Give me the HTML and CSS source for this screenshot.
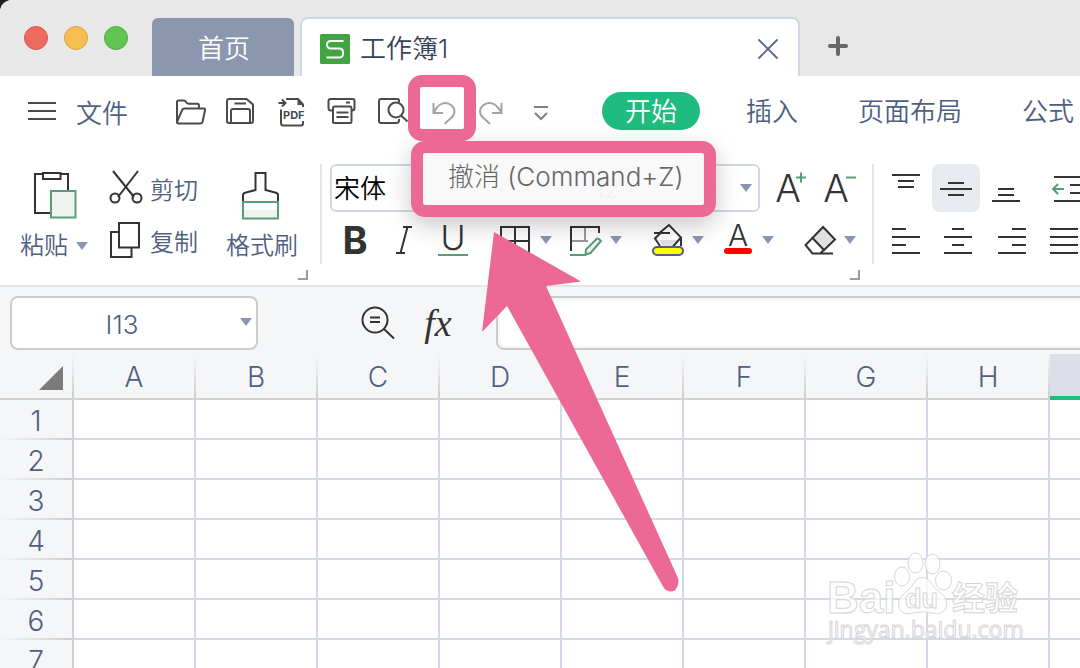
FILE: index.html
```html
<!DOCTYPE html>
<html lang="zh-CN">
<head>
<meta charset="utf-8">
<title>工作簿1</title>
<link rel="stylesheet" href="styles.css">
</head>
<body>
<div class="window">
  <header class="titlebar">
    <div class="lights">
      <button class="light light-close" aria-label="关闭窗口"></button>
      <button class="light light-min" aria-label="最小化"></button>
      <button class="light light-max" aria-label="最大化"></button>
    </div>
    <button class="tab-home">首页</button>
    <div class="tab-doc">
      <svg class="doc-logo" viewBox="0 0 30 30" aria-hidden="true"><rect width="30" height="30" rx="1.500" fill="#40a540"/><path d="M23.500 7H10.500a3.500 3.500 0 0 0-3.500 3.500v.5a3.500 3.500 0 0 0 3.500 3.500h9a3.500 3.500 0 0 1 3.500 3.500v2a3.500 3.500 0 0 1-3.500 3.500H6.500" fill="none" stroke="#fff" stroke-width="2"/></svg>
      <span class="doc-name">工作簿1</span>
      <button class="tab-close" aria-label="关闭"><svg width="20" height="20" viewBox="0 0 20 20"><path d="M.5.5l19 19M19.500.5l-19 19" stroke="#55648a" stroke-width="1.800"/></svg></button>
    </div>
    <button class="tab-add" aria-label="新建"><svg width="20" height="20" viewBox="0 0 20 20"><path d="M10 2v16M2 10h16" stroke="#686868" stroke-width="4" stroke-linecap="round"/></svg></button>
  </header>

  <nav class="menubar">
    <button class="file-menu">
      <svg width="28" height="20" viewBox="0 0 28 20" class="ico"><path d="M0 2h28M0 10h28M0 18h28"/></svg>
      <span>文件</span>
    </button>
    <div class="quick">
      <button aria-label="打开"><svg class="ico" viewBox="0 0 32 32"><path d="M2 26V6q0-1.500 1.500-1.500H9q1 0 2 1.500t2.500 1.700H22q2 0 2 2V12M2 26l5-11.500Q7.500 12.500 9.500 12.500H29q1.500 0 1 2L27.500 26q-.5 1.500-2 1.500H3.500Q2 27.500 2 26z"/></svg></button>
      <button aria-label="保存"><svg class="ico" viewBox="0 0 32 32"><path d="M4 3h17.500l6.500 5.500V25q0 2-2 2H4q-2 0-2-2V5q0-2 2-2zM6 27V15q0-2 2-2h15q2 0 2 2v12M9.500 7.500H21"/></svg></button>
      <button aria-label="输出为PDF"><svg class="ico" viewBox="0 0 32 32"><path d="M11 3h12l5 5.500V11M6 13.500V27q0 2.500 2.500 2.500H26q2 0 2-2V25M3.500 7H10M7 3.500L10.500 7 7 10.500"/><path d="M22.500 3l6 6h-6z" fill="#4a4a4a" stroke="none"/><text class="pdf" x="8" y="22.500">PDF</text></svg></button>
      <button aria-label="打印"><svg class="ico" viewBox="0 0 32 32"><path d="M8 14.500H6q-2.500 0-2.500-2.500V5Q3.500 3 5.500 3h22q2 0 2 2v7q0 2.500-2.500 2.500M8 27V12q0-1.500 1.500-1.500h15.500q1.500 0 1.500 1.500v13.500q0 1.500-1.500 1.500H9.500Q8 27 8 25.500M11.500 16.500h12M11.500 21h12M21 6.500h4"/></svg></button>
      <button aria-label="打印预览"><svg class="ico" viewBox="0 0 32 32"><path d="M24 6V4.500Q24 3 22.500 3H6Q4 3 4 5v20q0 2 2 2h15q3 0 3-2.500V23"/><circle cx="21" cy="14" r="7.500"/><path d="M26 19.500l6.500 6"/></svg></button>
      <button aria-label="撤消"><svg class="ico ico-dim" viewBox="0 0 32 32"><path d="M8.500 7v10H18M8.500 17C12 10 16 7 20 7c5 0 9.500 4 9.500 8.500 0 5-4 6.500-10 12.500"/></svg></button>
      <button aria-label="恢复"><svg class="ico ico-dim" viewBox="0 0 32 32"><path d="M26.500 7v10H17M26.500 17C23 10 19 7 14.500 7c-5 0-9.500 4-9.500 8.500 0 5 4 6.500 10 12.500"/></svg></button>
      <button aria-label="自定义"><svg class="ico ico-mid" viewBox="0 0 32 32"><path d="M9 11h14M10 17l6 6 6-6"/></svg></button>
    </div>
    <div class="menus">
      <button class="menu menu-active">开始</button>
      <button class="menu">插入</button>
      <button class="menu">页面布局</button>
      <button class="menu">公式</button>
    </div>
  </nav>

  <section class="ribbon">
    <div class="group">
      <div class="clip">
        <button class="big">
          <svg width="44" height="48" viewBox="0 0 44 48"><path d="M11 2H3v39h15M28 2h8v17M11 1h17.500v6H11z" fill="none" stroke="#333" stroke-width="2"/><rect x="19" y="19" width="24.500" height="26.500" fill="#edf3f0" stroke="#5a9c76" stroke-width="2"/></svg>
          <span class="big-label">粘贴 <svg class="caret" viewBox="0 0 12 8"><path d="M0 0h12L6 8z"/></svg></span>
        </button>
        <div class="stack">
          <button class="small"><svg width="36" height="36" viewBox="0 0 36 36" fill="none" stroke="#333" stroke-width="2"><path d="M5 1l21 26M30 1L10 27"/><circle cx="7" cy="28" r="4.500"/><circle cx="29" cy="28" r="4.500"/></svg><span>剪切</span></button>
          <button class="small"><svg width="36" height="36" viewBox="0 0 36 36" fill="none" stroke="#333" stroke-width="2"><path d="M11 10H3v25h20.500v-8.500M11 1h20v24.500H11z"/></svg><span>复制</span></button>
        </div>
        <button class="big">
          <svg width="40" height="48" viewBox="0 0 40 48"><path d="M1 31V23q0-2 3-2.500l9.500-2.500V1h10v17l9.500 2.500q3 .5 3 2.500v8" fill="none" stroke="#333" stroke-width="2"/><path d="M1 38h35v8H1z" fill="#edf3f0"/><path d="M1 30h35v16.500H1z" fill="none" stroke="#5a9c76" stroke-width="2"/></svg>
          <span class="big-label">格式刷</span>
        </button>
      </div>
      <button class="launcher" aria-label="剪贴板设置"></button>
    </div>

    <div class="group group-font">
      <div class="font-row">
        <div class="combo">
          <label class="field field-name"><select aria-label="字体"><option>宋体</option></select><svg class="caret" viewBox="0 0 12 8"><path d="M0 0h12L6 8z"/></svg></label>
          <label class="field field-size"><select aria-label="字号"><option>12</option></select><svg class="caret" viewBox="0 0 12 8"><path d="M0 0h12L6 8z"/></svg></label>
        </div>
        <button class="tool" aria-label="增大字号"><svg viewBox="0 0 32 32"><text class="glyph glyph-a" x="12" y="30">A</text><path d="M20 5.500h10M25 .5v10" stroke="#5a9c76" stroke-width="2"/></svg></button>
        <button class="tool" aria-label="减小字号"><svg viewBox="0 0 32 32"><text class="glyph glyph-a" x="12" y="30">A</text><path d="M22 5.500h10" stroke="#5a9c76" stroke-width="2"/></svg></button>
      </div>
      <div class="style-row">
        <div class="set">
          <button class="tool" aria-label="加粗"><svg viewBox="0 0 32 32"><text class="glyph glyph-b" x="17" y="30">B</text></svg></button>
          <button class="tool" aria-label="倾斜"><svg viewBox="0 0 32 32"><path d="M15 3h9M8 29h9M19.500 3l-7 26" fill="none" stroke="#333" stroke-width="2"/></svg></button>
          <button class="tool" aria-label="下划线"><svg viewBox="0 0 32 32"><text class="glyph glyph-u" x="15" y="26">U</text><path d="M0 31h30" stroke="#5a9c76" stroke-width="2"/></svg></button>
        </div>
        <div class="set">
          <button class="tool" aria-label="边框"><svg viewBox="0 0 32 32"><path d="M1 3h28v28H1zM1 17h28M15 3v28" fill="none" stroke="#333" stroke-width="2"/></svg><svg class="caret" viewBox="0 0 12 8"><path d="M0 0h12L6 8z"/></svg></button>
          <button class="tool" aria-label="边框样式"><svg viewBox="0 0 32 32" fill="none" stroke-width="2"><path d="M2 17h16M15 4v14" stroke="#999"/><path d="M1 27V3h28v6" stroke="#333"/><path d="M0 31h16" stroke="#5a9c76"/><path d="M15.500 30.500l.5-5 11-11q1.500-.5 4 2.500l-10.500 12z" fill="#edf3f0" stroke="#5a9c76"/></svg><svg class="caret" viewBox="0 0 12 8"><path d="M0 0h12L6 8z"/></svg></button>
        </div>
        <div class="set">
          <button class="tool" aria-label="填充颜色"><svg viewBox="0 0 32 32"><path d="M7 16h21l-6 7H11z" fill="#e1e1e1"/><path d="M8 8.500L17 1l12 12.500-8 9M8 22l-5-7.500 6-6M2 9h16M29 13v9" fill="none" stroke="#333" stroke-width="2"/><rect x="1" y="23" width="30" height="8" rx="4" fill="#ff0" stroke="#4f6184" stroke-width="2"/></svg><svg class="caret" viewBox="0 0 12 8"><path d="M0 0h12L6 8z"/></svg></button>
          <button class="tool" aria-label="字体颜色"><svg viewBox="0 0 32 32"><text class="glyph glyph-c" x="16" y="22">A</text><rect x="2" y="24" width="28" height="6" rx="3" fill="red"/></svg><svg class="caret" viewBox="0 0 12 8"><path d="M0 0h12L6 8z"/></svg></button>
        </div>
        <div class="set">
          <button class="tool" aria-label="清除"><svg viewBox="0 0 32 32" stroke="#333" stroke-width="2"><path d="M8.500 14L19 3l12 12.500L20 26z" fill="#e1e1e1"/><path d="M8.500 14L1.500 21l7 8.500H29M20 26l-3.500 3" fill="none"/></svg><svg class="caret" viewBox="0 0 12 8"><path d="M0 0h12L6 8z"/></svg></button>
        </div>
      </div>
      <button class="launcher" aria-label="字体设置"></button>
    </div>

    <div class="group">
      <div class="align-top">
        <button class="align" aria-label="顶端对齐"><svg viewBox="0 0 48 48"><path d="M10 11h28M16 17h16M16 23h16"/></svg></button>
        <button class="align align-on" aria-label="垂直居中"><svg viewBox="0 0 48 48"><path d="M16 19h16M8 25h32M16 31h16"/></svg></button>
        <button class="align" aria-label="底端对齐"><svg viewBox="0 0 48 48"><path d="M16 25h16M16 31h16M10 37h28"/></svg></button>
        <button class="align align-indent" aria-label="减少缩进"><svg viewBox="0 0 48 48"><path d="M10 13h30M26 21h14M26 29h14M10 37h30"/><path class="green" d="M8.500 25H20M14 20l-5 5 5 5"/></svg></button>
      </div>
      <div class="align-bottom">
        <button class="align" aria-label="左对齐"><svg viewBox="0 0 48 40"><path d="M10 9h14M10 17h28M10 25h14M10 33h28"/></svg></button>
        <button class="align" aria-label="水平居中"><svg viewBox="0 0 48 40"><path d="M17 9h12M9 17h28M17 25h12M9 33h28"/></svg></button>
        <button class="align" aria-label="右对齐"><svg viewBox="0 0 48 40"><path d="M24 9h14M10 17h28M24 25h14M10 33h28"/></svg></button>
        <button class="align" aria-label="两端对齐"><svg viewBox="0 0 48 40"><path d="M9 9h28M9 17h28M9 25h28M9 33h28"/></svg></button>
      </div>
    </div>
  </section>

  <section class="formula-bar">
    <div class="name-box"><input type="text" value="I13" aria-label="名称框"><svg class="caret" viewBox="0 0 12 8"><path d="M0 0h12L6 8z"/></svg></div>
    <div class="fx-tools">
      <button aria-label="查找"><svg width="36" height="36" viewBox="0 0 36 36" fill="none" stroke="#333" stroke-width="2"><circle cx="15" cy="15" r="12.500"/><path d="M10 12.500h10M10 17h10M24 24l10 9.500"/></svg></button>
      <button class="fx">fx</button>
    </div>
    <input class="formula" type="text" aria-label="编辑栏">
  </section>

  <main class="sheet">
    <table class="grid">
      <colgroup><col class="c-head"><col><col><col><col><col><col><col><col><col></colgroup>
      <thead>
        <tr><th class="corner"><svg width="24" height="24" viewBox="0 0 24 24"><path d="M24 0v24H0z" fill="#7b7b7b"/></svg></th><th>A</th><th>B</th><th>C</th><th>D</th><th>E</th><th>F</th><th>G</th><th>H</th><th class="picked"></th></tr>
      </thead>
      <tbody>
        <tr><th>1</th><td></td><td></td><td></td><td></td><td></td><td></td><td></td><td></td><td></td></tr>
        <tr><th>2</th><td></td><td></td><td></td><td></td><td></td><td></td><td></td><td></td><td></td></tr>
        <tr><th>3</th><td></td><td></td><td></td><td></td><td></td><td></td><td></td><td></td><td></td></tr>
        <tr><th>4</th><td></td><td></td><td></td><td></td><td></td><td></td><td></td><td></td><td></td></tr>
        <tr><th>5</th><td></td><td></td><td></td><td></td><td></td><td></td><td></td><td></td><td></td></tr>
        <tr><th>6</th><td></td><td></td><td></td><td></td><td></td><td></td><td></td><td></td><td></td></tr>
        <tr><th>7</th><td></td><td></td><td></td><td></td><td></td><td></td><td></td><td></td><td></td></tr>
      </tbody>
    </table>
  </main>

  <div class="tooltip" role="tooltip">撤消 (Command+Z)</div>
  <div class="ring"></div>
  <svg class="arrow" width="200" height="362" viewBox="481 231 200 362" aria-hidden="true"><path d="M494 232l87 49.500-35 4.500L678 578q2 6-3 12.500-8 3-12-4L507 306l-25 26z" fill="#ec6895"/></svg>
  <svg class="watermark" width="200" height="96" viewBox="824 550 200 96" aria-hidden="true">
    <g class="wm">
      <text class="wm-bai" x="827" y="613">Bai</text>
      <ellipse cx="902" cy="576.500" rx="7.500" ry="9.500"/><ellipse cx="915.500" cy="563" rx="7.500" ry="10"/><ellipse cx="932.500" cy="564" rx="7.500" ry="10"/><ellipse cx="943.500" cy="580.500" rx="8" ry="9.500"/>
      <path d="M922 577.500c7 0 9 6 13 10.500s12 8 11.500 16-6 10.500-12 9.500c-8-2-16-2-24 0-6 1-12-2-12-9.500s8-12 12-16 4.500-10.500 11.500-10.500z"/>
      <text class="wm-du" x="905" y="608">du</text>
      <text class="wm-cn" x="952" y="610">经验</text>
      <text class="wm-url" x="828" y="638">jingyan.baidu.com</text>
    </g>
  </svg>
</div>
</body>
</html>
```
FILE: styles.css
```css
* {
  box-sizing: border-box;
}

body {
  margin: 0;
  height: 100vh;
  overflow: hidden;
  background: #24211f;
  color: #4f5f82;
  font-family: Inter, "Noto Sans CJK SC", sans-serif;
  font-size: 26px;
  font-weight: 350;
}

button {
  margin: 0;
  padding: 0;
  border: 0;
  background: none;
  color: inherit;
  font: inherit;
  white-space: nowrap;
}

svg {
  display: block;
  overflow: visible;
}

.window {
  position: relative;
  display: flex;
  flex-direction: column;
  height: 100%;
  overflow: hidden;
  border-top-left-radius: 12px;
  background: #fff;
}

/* Title bar */
.titlebar {
  display: flex;
  align-items: flex-end;
  flex-shrink: 0;
  height: 76px;
  padding-left: 24px;
  background: #e8e8e8;
}

.lights {
  display: flex;
  gap: 16px;
  margin: 0 24px 26px 0;
}

.light {
  width: 24px;
  height: 24px;
  border: 1px solid;
  border-radius: 50%;
}

.light-close { background: #ed6a5e; border-color: #d8574c; }
.light-min { background: #f5bf4f; border-color: #d9a441; }
.light-max { background: #61c554; border-color: #50ab43; }

.tab-home {
  width: 142px;
  height: 58px;
  margin-right: 6px;
  padding: 0 0 2px 2px;
  border-radius: 6px 6px 0 0;
  background: #8b96af;
  color: #fff;
}

.tab-doc {
  display: flex;
  flex: 0 1 500px;
  align-items: center;
  height: 59px;
  padding: 2px 20px 0 18px;
  border: 2px solid #d0d7e5;
  border-bottom: 0;
  border-radius: 8px 8px 0 0;
  background: #fff;
}

.doc-logo {
  width: 30px;
  height: 30px;
}

.doc-name {
  margin: 0 auto 0 10px;
  padding-bottom: 4px;
  color: #37425c;
}

.tab-add {
  margin: 0 0 20px 28px;
}

/* Menu bar */
.menubar {
  display: flex;
  align-items: center;
  flex-shrink: 0;
  height: 70px;
  padding-left: 28px;
}

.ico {
  fill: none;
  stroke: #4a4a4a;
  stroke-width: 2px;
}

.ico-dim { stroke: #a3a3a3; }
.ico-mid { stroke: #808080; }

.pdf {
  fill: #4a4a4a;
  stroke: none;
  font: 700 11px Inter, sans-serif;
}

.file-menu {
  display: flex;
  align-items: center;
  gap: 20px;
  margin-right: 38px;
}

.quick {
  display: flex;
  padding-top: 2px;
}

.quick button {
  display: flex;
  justify-content: center;
  width: 50px;
}

.quick svg {
  width: 32px;
  height: 32px;
}

.menus {
  display: flex;
  gap: 12px;
  margin-left: 36px;
}

.menu {
  height: 38px;
  padding: 0 24px;
  line-height: 40px;
}

.menu-active {
  margin-right: 10px;
  padding: 0 23px;
  border-radius: 19px;
  background: #20bb7f;
  color: #fff;
}

/* Ribbon */
.ribbon {
  display: flex;
  flex-shrink: 0;
  padding: 18px 0 5px 20px;
  border-bottom: 2px solid #e4e6eb;
}

.group {
  display: flex;
  flex-direction: column;
  padding-right: 12px;
}

.group + .group {
  padding-left: 10px;
  background: linear-gradient(#e4e5e8, #e4e5e8) left top / 2px 100px no-repeat;
}

.clip {
  display: flex;
  height: 100px;
  padding-right: 10px;
  font-size: 24px;
}

.big {
  display: flex;
  flex-direction: column;
  align-items: center;
  gap: 12px;
  padding-top: 8px;
}

.big-label {
  display: flex;
  align-items: center;
  gap: 8px;
  height: 28px;
  line-height: 28px;
}

.caret {
  flex-shrink: 0;
  width: 12px;
  height: 8px;
  fill: #8a95b3;
}

.stack {
  display: flex;
  flex-direction: column;
  gap: 16px;
  margin: 6px 28px 0 20px;
}

.small {
  display: flex;
  align-items: center;
  gap: 6px;
  height: 36px;
}

.launcher {
  align-self: flex-end;
  width: 10px;
  height: 10px;
  margin-top: 6px;
  border: solid #9b9b9b;
  border-width: 0 2px 2px 0;
}

.font-row {
  display: flex;
  align-items: center;
  gap: 16px;
  padding-right: 4px;
}

.combo {
  display: flex;
  width: 430px;
  height: 48px;
  border: 2px solid #d0d9e8;
  border-radius: 6px;
}

.field {
  display: flex;
  align-items: center;
  padding-right: 6px;
}

.field-name { flex: 1; }

.field-size {
  width: 176px;
  padding-left: 8px;
  border-left: 2px solid #d0d9e8;
}

.field select {
  flex: 1;
  min-width: 0;
  padding: 0 0 0 2px;
  border: 0;
  appearance: none;
  background: none;
  color: #000;
  font: inherit;
}

.tool {
  display: flex;
  align-items: center;
  gap: 8px;
}

.tool svg:first-child {
  width: 32px;
  height: 32px;
}

.glyph {
  fill: #333;
  font-family: Inter, sans-serif;
  font-weight: 300;
  text-anchor: middle;
}

.glyph-a { font-size: 38px; }
.glyph-b { font-size: 38px; font-weight: 700; }
.glyph-u { font-size: 34px; }
.glyph-c { font-size: 30px; }

.style-row {
  display: flex;
  gap: 30px;
  height: 40px;
  margin-top: 8px;
  padding: 0 4px 0 8px;
}

.style-row + .launcher {
  margin-top: 10px;
}

.set {
  display: flex;
  gap: 18px;
}

.align-top {
  display: flex;
  gap: 2px;
}

.align-bottom {
  display: flex;
  gap: 5px;
  margin-top: 8px;
}

.align {
  width: 48px;
  border-radius: 8px;
  fill: none;
  stroke: #333;
  stroke-width: 2px;
}

.align-on { background: #e7ebf0; }
.align-indent { margin-left: 12px; }
.green { stroke: #5a9c76; }

/* Formula bar */
.formula-bar {
  display: flex;
  flex-shrink: 0;
  padding: 9px 0 4px 10px;
  background: #f5f6f8;
}

.name-box {
  display: flex;
  align-items: center;
  width: 248px;
  height: 54px;
  padding: 0 4px 2px 0;
  border: 2px solid #ccc;
  border-radius: 8px;
  background: #fff;
}

.name-box input {
  flex: 1;
  min-width: 0;
  padding: 4px 8px 0 0;
  border: 0;
  background: none;
  color: inherit;
  font: inherit;
  text-align: center;
}

.fx-tools {
  display: flex;
  align-items: center;
  gap: 24px;
  margin: 0 40px 0 102px;
  color: #333;
}

.fx {
  width: 36px;
  font: italic 38px "Liberation Serif", serif;
  line-height: 36px;
}

.formula {
  flex: 1;
  min-width: 0;
  border: 2px solid #ccc;
  border-right: 0;
  border-radius: 8px 0 0 8px;
  background: #fff;
  box-shadow: inset 0 2px #f6f6f6, inset 2px -2px #f6f6f6;
  font: inherit;
}

/* Sheet */
.sheet {
  flex: 1;
  min-height: 0;
  overflow: hidden;
}

.grid {
  width: 1172px;
  border-spacing: 0;
  table-layout: fixed;
}

.c-head { width: 74px; }

.grid th,
.grid td {
  height: 40px;
  padding: 0;
  border: solid #d2dae8;
  border-width: 0 2px 2px 0;
}

.grid th {
  padding-right: 2px;
  border: 0;
  background: #f5f6f8;
  font-size: 28px;
  font-weight: 300;
  line-height: 38px;
}

.grid thead th {
  height: 46px;
  background:
    linear-gradient(#d2d2d2, #d2d2d2) bottom / 100% 2px no-repeat,
    linear-gradient(#f5f6f8, #cdcdcd) right / 2px 100% no-repeat,
    #f5f6f8;
}

.grid tbody th {
  padding-top: 2px;
  background:
    linear-gradient(#d2d2d2, #d2d2d2) right / 2px 100% no-repeat,
    linear-gradient(90deg, #f5f6f8, #cdcdcd) bottom / 100% 2px no-repeat,
    #f5f6f8;
}

.grid .corner svg {
  margin: 2px 0 0 39px;
}

.grid thead .picked {
  background: linear-gradient(#20bb7f, #20bb7f) bottom / 100% 4px no-repeat, #dcdfe7;
}

/* Floating layers */
.tooltip {
  position: absolute;
  left: 411px;
  top: 141px;
  padding: 8px 20px 12px 25px;
  border: 12px solid #ec6895;
  border-radius: 14px;
  background: rgba(249, 249, 249, 0.97);
  background-clip: padding-box;
  box-shadow: 0 8px 24px rgba(0, 0, 0, 0.22);
  color: #666;
  font-weight: 300;
  line-height: 32px;
  white-space: nowrap;
}

.ring {
  position: absolute;
  left: 408px;
  top: 75px;
  width: 68px;
  height: 66px;
  border: 12px solid #ec6895;
  border-radius: 14px;
}

.arrow {
  position: absolute;
  left: 481px;
  top: 231px;
}

.watermark {
  position: absolute;
  left: 824px;
  top: 550px;
}

.wm {
  fill: rgba(255, 255, 255, 0.75);
  stroke: #d6d6d6;
  stroke-width: 1px;
}

.wm text { font-family: "Liberation Sans", "Noto Sans CJK SC", sans-serif; font-weight: 700; }
.wm .wm-bai { font-size: 44px; }
.wm .wm-du { font-size: 27px; }
.wm .wm-cn { font-size: 33px; }
.wm .wm-url { font-family: "Open Sans", sans-serif; font-size: 23px; font-weight: 400; }
```
